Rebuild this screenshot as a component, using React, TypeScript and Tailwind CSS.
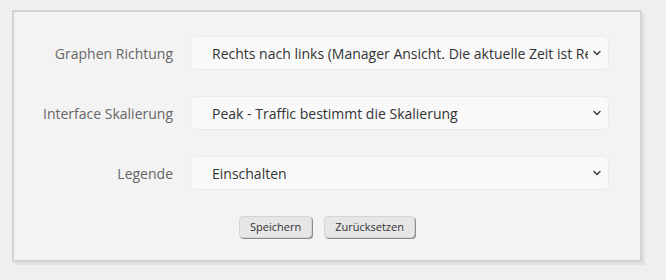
import { ChevronDown } from 'lucide-react'

const rows = [
  { label: 'Graphen Richtung', value: 'Rechts nach links (Manager Ansicht. Die aktuelle Zeit ist Rechts)' },
  { label: 'Interface Skalierung', value: 'Peak - Traffic bestimmt die Skalierung' },
  { label: 'Legende', value: 'Einschalten' },
]

export default function App() {
  return (
    <div className="min-h-[280px] bg-[#efefef] pl-[12px] pt-[10px] font-['Open_Sans',sans-serif]">
      <div className="w-[630px] h-[252px] border-2 border-[#d3d3d3] bg-[#f3f3f3] shadow-[3px_3px_0_#e2e2e2] pt-[24px]">
        <div className="flex flex-col gap-[26px]">
          {rows.map((r) => (
            <div key={r.label} className="flex items-center">
              <div className="w-[176px] pr-[17px] text-right text-[14px] text-[#666]">{r.label}</div>
              <div className="w-[419px] h-[34px] rounded-[6px] border border-[#ebebeb] bg-[#f9f9f9] flex items-center pl-[21px] pr-[5px] text-[14px] text-[#333]">
                <span className="flex-1 overflow-hidden whitespace-nowrap">{r.value}</span>
                <ChevronDown size={12} strokeWidth={3} className="text-[#444] shrink-0 ml-[3px]" />
              </div>
            </div>
          ))}
        </div>
        <div className="flex justify-center gap-[12px] mt-[26px]">
          <button className="h-[22px] px-[10px] rounded-[4px] border border-[#d4d4d4] bg-[#e6e6e6] shadow-[1px_1px_0_#8a8a8a] text-[11px] text-[#333]">Speichern</button>
          <button className="h-[22px] px-[10px] rounded-[4px] border border-[#d4d4d4] bg-[#e6e6e6] shadow-[1px_1px_0_#8a8a8a] text-[11px] text-[#333]">Zurücksetzen</button>
        </div>
      </div>
    </div>
  )
}
